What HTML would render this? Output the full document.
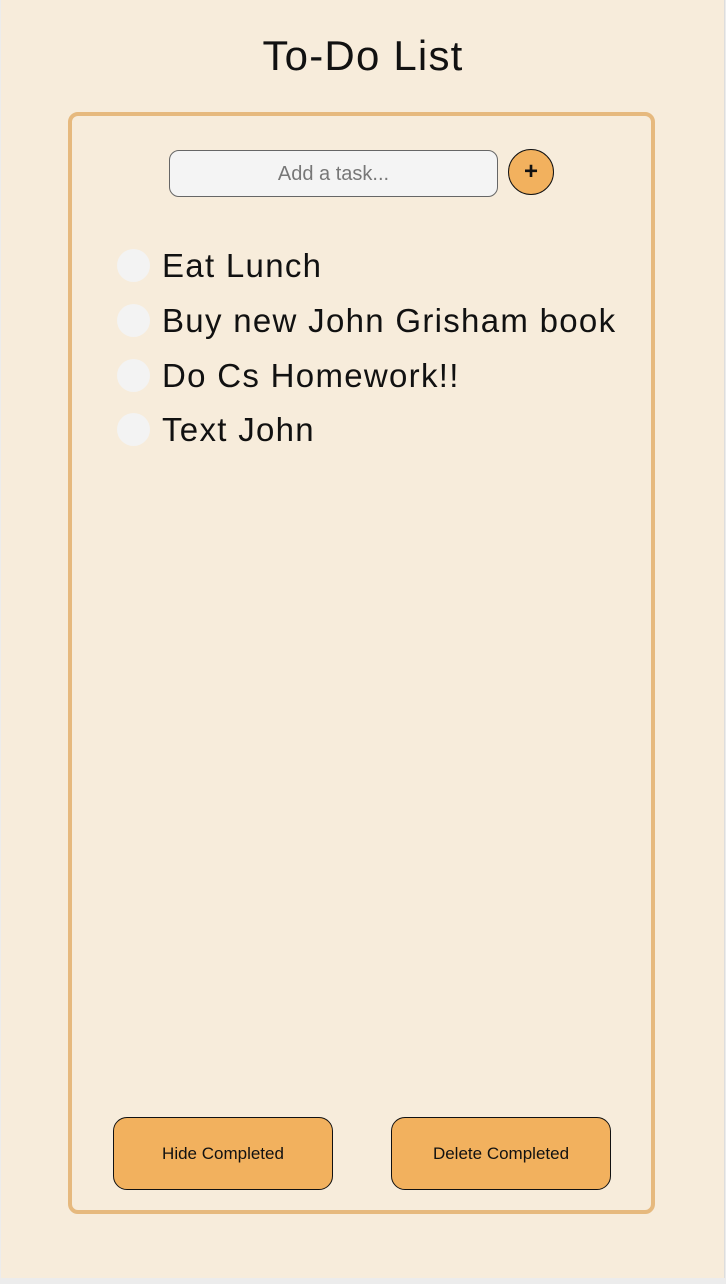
<!DOCTYPE html>
<html><head><style>
html,body{margin:0;padding:0;}
body{width:726px;height:1284px;background:#ececec;position:relative;font-family:"Liberation Sans",sans-serif;overflow:hidden;}
.page{position:absolute;left:1px;top:0;width:723px;height:1278px;background:#f7ecdb;border-right:1px solid #ddd;}
h1{position:absolute;left:0;width:726px;top:32px;margin:0;text-align:center;font-weight:normal;font-size:42px;letter-spacing:1.2px;color:#111;}
.panel{position:absolute;left:68px;top:112px;width:579px;height:1094px;border:4px solid #e6b97e;border-radius:10px;}
.inp{position:absolute;left:169px;top:150px;width:327px;height:45px;border:1px solid #666;border-radius:10px;background:#f4f4f4;color:#777;font-size:20px;text-align:center;line-height:46px;box-sizing:content-box;}
.plus{position:absolute;left:508px;top:149px;width:44px;height:44px;border:1.5px solid #111;border-radius:50%;background:#f2b15e;text-align:center;line-height:44px;font-size:24px;font-weight:bold;color:#111;}
.item{position:absolute;left:117px;height:40px;font-size:33px;color:#111;}
.item .c{position:absolute;left:0;top:3px;width:33px;height:33px;border-radius:50%;background:#f3f3f3;}
.item span{position:absolute;left:45px;top:1px;white-space:nowrap;letter-spacing:1.3px;}
.btn{position:absolute;top:1117px;width:218px;height:71px;border:1.5px solid #111;border-radius:14px;background:#f2b15e;text-align:center;line-height:72px;font-size:17px;color:#111;}
</style></head><body>
<div class="page"></div>
<h1>To-Do List</h1>
<div class="panel"></div>
<div class="inp">Add a task...</div>
<div class="plus">+</div>
<div class="item" style="top:246px"><div class="c"></div><span>Eat Lunch</span></div>
<div class="item" style="top:301px"><div class="c"></div><span>Buy new John Grisham book</span></div>
<div class="item" style="top:356px"><div class="c"></div><span>Do Cs Homework!!</span></div>
<div class="item" style="top:410px"><div class="c"></div><span>Text John</span></div>
<div class="btn" style="left:113px">Hide Completed</div>
<div class="btn" style="left:391px">Delete Completed</div>
</body></html>
